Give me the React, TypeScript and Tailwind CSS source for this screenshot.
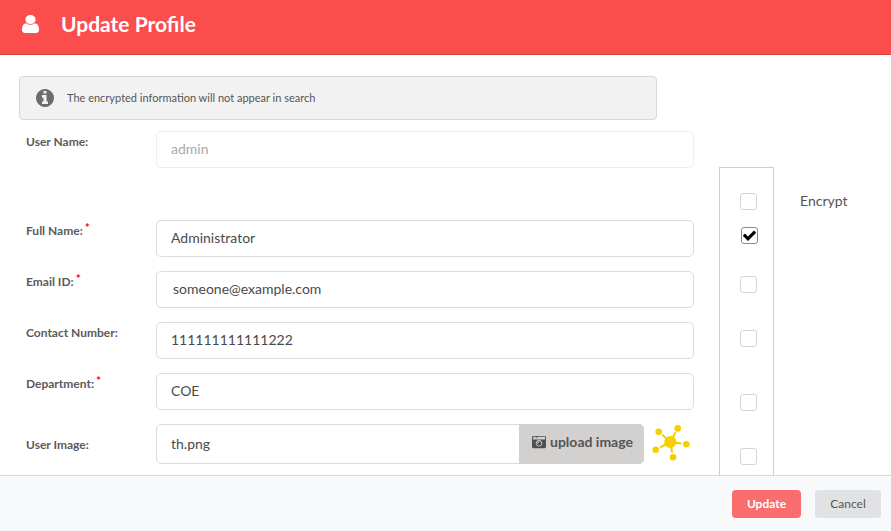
import React from "react";
import { FaCameraRetro } from "react-icons/fa";

interface FieldRowProps {
  label: string;
  required?: boolean;
  value: string;
  className?: string;
  inputClass?: string;
}

const FieldRow: React.FC<FieldRowProps> = ({ label, required, value, className, inputClass }) => {
  return (
    <div className={`flex ${className ?? ""}`}>
      <div className="w-[137px] pl-[7px] pt-[2px] text-[12px] leading-[18px] font-bold text-[#5b5b5b]">
        {label}
        {required && <span className="relative top-[-3px] ml-[2px] text-[#ff0000]">*</span>}
      </div>
      <div className={`w-[538px] h-[37px] flex items-center bg-white border border-[#dcdcdc] rounded-[5px] pb-[2px] text-[14px] text-[#4a4a4a] ${inputClass ?? "pl-[14px]"}`}>
        {value}
      </div>
    </div>
  );
};

const CheckIcon = () => (
  <svg width="15" height="15" viewBox="0 0 1792 1792" fill="#000000">
    <path d="M1671 566q0 40-28 68l-724 724-136 136q-28 28-68 28t-68-28l-136-136-362-362q-28-28-28-68t28-68l136-136q28-28 68-28t68 28l294 295 656-657q28-28 68-28t68 28l136 136q28 28 28 68z" />
  </svg>
);

const Checkbox: React.FC<{ checked?: boolean; className: string }> = ({ checked, className }) => {
  return (
    <div className={`w-[17px] h-[17px] flex items-center justify-center bg-white border rounded-[3px] ${checked ? "ml-[21px] border-[#8a8a8a]" : "ml-[20px] border-[#d4d4d4]"} ${className}`}>
      {checked && <CheckIcon />}
    </div>
  );
};

const UserIcon = () => (
  <svg width="17" height="18" viewBox="256 128 1280 1536" preserveAspectRatio="none" fill="#ffffff">
    <path d="M1536 1399q0 109-62.5 187t-150.5 78h-854q-88 0-150.5-78t-62.5-187q0-85 8.5-160.5t31.5-152 58.5-131 94-89 134.5-34.5q131 128 313 128t313-128q76 0 134.5 34.5t94 89 58.5 131 31.5 152 8.5 160.5zm-256-887q0 159-112.5 271.5t-271.5 112.5-271.5-112.5-112.5-271.5 112.5-271.5 271.5-112.5 271.5 112.5 112.5 271.5z" />
  </svg>
);

const InfoIcon = () => (
  <svg width="18" height="18" viewBox="128 128 1536 1536" fill="#6d6d6d">
    <path d="M1152 1376v-160q0-14-9-23t-23-9h-96v-512q0-14-9-23t-23-9h-320q-14 0-23 9t-9 23v160q0 14 9 23t23 9h96v320h-96q-14 0-23 9t-9 23v160q0 14 9 23t23 9h448q14 0 23-9t9-23zm-128-896v-160q0-14-9-23t-23-9h-192q-14 0-23 9t-9 23v160q0 14 9 23t23 9h192q14 0 23-9t9-23zm640 416q0 209-103 385.5t-279.5 279.5-385.5 103-385.5-103-279.5-279.5-103-385.5 103-385.5 279.5-279.5 385.5-103 385.5 103 279.5 279.5 103 385.5z" />
  </svg>
);

const HubIcon = () => (
  <svg width="40" height="38" viewBox="0 0 40 38" fill="#f5cf00" stroke="#f5cf00">
    <line x1="18.3" y1="17" x2="10.2" y2="9.8" strokeWidth="2" />
    <line x1="18.3" y1="17" x2="23.5" y2="7.2" strokeWidth="2" />
    <line x1="18.3" y1="17" x2="29.5" y2="18.6" strokeWidth="2" />
    <line x1="18.3" y1="17" x2="20.2" y2="27.7" strokeWidth="2" />
    <line x1="18.3" y1="17" x2="8.1" y2="22.4" strokeWidth="2" />
    <circle cx="18.3" cy="17" r="6" stroke="none" />
    <circle cx="6.7" cy="6.7" r="3.3" stroke="none" />
    <circle cx="25.7" cy="3.4" r="3.3" stroke="none" />
    <circle cx="34.3" cy="19.3" r="3.3" stroke="none" />
    <circle cx="21" cy="32.3" r="3.3" stroke="none" />
    <circle cx="3.7" cy="24.7" r="3.3" stroke="none" />
  </svg>
);

export default function App() {
  return (
    <div className="w-[891px] h-[531px] flex flex-col overflow-hidden bg-white font-['Lato',sans-serif]">
      {/* Header */}
      <div className="h-[55px] shrink-0 flex items-center bg-[#fc4d4d] border-b border-[#d94545] pl-[22px]">
        <div className="mb-[7px]">
          <UserIcon />
        </div>
        <h1 className="ml-[22px] mb-[6px] text-[21px] font-bold text-white">Update Profile</h1>
      </div>

      {/* Body */}
      <div className="h-[420px] shrink-0 flex overflow-hidden">
        <div className="w-[694px] pl-[19px] shrink-0">
          <div className="w-[638px] h-[44px] mt-[21px] flex items-center bg-[#f2f2f2] border border-[#d9d9d9] rounded-[4px] pl-[16px]">
            <InfoIcon />
            <span className="ml-[13px] text-[11px] text-[#555555]">The encrypted information will not appear in search</span>
          </div>
          <FieldRow label="User Name:" value="admin" className="mt-[11px]" inputClass="pl-[14px] text-[#aaaaaa] border-[#eeeeee]" />
          <FieldRow label="Full Name:" required value="Administrator" className="mt-[52px]" />
          <FieldRow label="Email ID:" required value="someone@example.com" className="mt-[14px]" inputClass="pl-[16px]" />
          <FieldRow label="Contact Number:" value="111111111111222" className="mt-[14px]" />
          <FieldRow label="Department:" required value="COE" className="mt-[14px]" />
          <div className="flex mt-[14px]">
            <div className="w-[137px] pl-[7px] pt-[12px] text-[12px] leading-[18px] font-bold text-[#5b5b5b]">User Image:</div>
            <div className="w-[488px] h-[40px] flex bg-white border border-[#dcdcdc] rounded-[5px]">
              <div className="flex-1 flex items-center pl-[14px] pb-[2px] text-[14px] text-[#4a4a4a]">th.png</div>
              <div className="w-[125px] -my-px -mr-px flex items-center justify-center gap-[4px] bg-[#d2d1cf] rounded-r-[5px] pl-[2px] pb-[5px] text-[14px] font-bold text-[#555555]">
                <FaCameraRetro className="text-[14px] text-[#4f4f4f]" />
                upload image
              </div>
            </div>
            <div className="ml-[8px] mt-[1px]">
              <HubIcon />
            </div>
          </div>
        </div>

        {/* Encrypt column */}
        <div className="ml-[25px] mt-[112px] flex items-start">
          <div className="w-[55px] h-[400px] border-x border-t border-[#cfcfcf] pt-[25px]">
            <Checkbox className="" />
            <Checkbox checked className="mt-[17px]" />
            <Checkbox className="mt-[32px]" />
            <Checkbox className="mt-[37px]" />
            <Checkbox className="mt-[47px]" />
            <Checkbox className="mt-[37px]" />
          </div>
          <span className="ml-[26px] mt-[25px] text-[14px] leading-[18px] text-[#555555]">Encrypt</span>
        </div>
      </div>

      {/* Footer */}
      <div className="flex-1 flex items-center justify-end gap-[14px] bg-[#f8f9fb] border-t border-[#d8d8dc] pr-[10px]">
        <button className="w-[69px] h-[28px] rounded-[4px] bg-[#f96d6d] text-[12px] font-bold text-white">Update</button>
        <button className="w-[66px] h-[28px] rounded-[4px] bg-[#e1e2e4] text-[12px] text-[#555555]">Cancel</button>
      </div>
    </div>
  );
}
